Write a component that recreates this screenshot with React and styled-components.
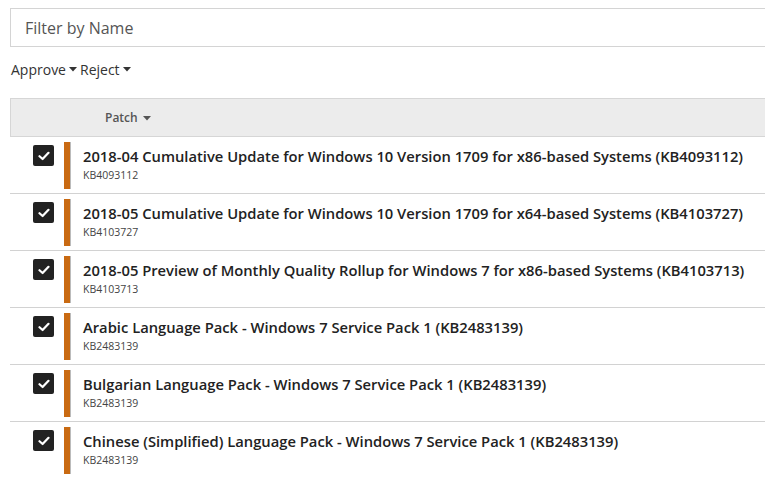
import React from 'react'
import styled, { createGlobalStyle } from 'styled-components'

const patches = [
  { title: '2018-04 Cumulative Update for Windows 10 Version 1709 for x86-based Systems (KB4093112)', kb: 'KB4093112' },
  { title: '2018-05 Cumulative Update for Windows 10 Version 1709 for x64-based Systems (KB4103727)', kb: 'KB4103727' },
  { title: '2018-05 Preview of Monthly Quality Rollup for Windows 7 for x86-based Systems (KB4103713)', kb: 'KB4103713' },
  { title: 'Arabic Language Pack - Windows 7 Service Pack 1 (KB2483139)', kb: 'KB2483139' },
  { title: 'Bulgarian Language Pack - Windows 7 Service Pack 1 (KB2483139)', kb: 'KB2483139' },
  { title: 'Chinese (Simplified) Language Pack - Windows 7 Service Pack 1 (KB2483139)', kb: 'KB2483139' },
]

function Caret() {
  return (
    <CaretIcon viewBox="0 0 8 5">
      <path d="M0 0 L8 0 L4 4.5 Z" fill="currentColor" />
    </CaretIcon>
  )
}

function Check() {
  return (
    <svg width="12" height="10" viewBox="0 0 12 10">
      <path d="M1.5 5.2 L4.6 8 L10.5 1.8" fill="none" stroke="#fff" strokeWidth="2.2" strokeLinecap="round" strokeLinejoin="round" />
    </svg>
  )
}

function App() {
  return (
    <>
      <GlobalStyle />
      <Page>
        <Search placeholder="Filter by Name" />
        <Actions>
          <Action>Approve <Caret /></Action>
          <Action>Reject <Caret /></Action>
        </Actions>
        <Header>
          <HeaderLabel>Patch <Caret /></HeaderLabel>
        </Header>
        {patches.map((p, i) => (
          <Row key={i}>
            <Box><Check /></Box>
            <Bar />
            <Info>
              <Title>{p.title}</Title>
              <Kb>{p.kb}</Kb>
            </Info>
          </Row>
        ))}
      </Page>
    </>
  )
}

export default App

const GlobalStyle = createGlobalStyle`
  body {
    margin: 0;
    background: #fff;
    font-family: "Open Sans", "Liberation Sans", sans-serif;
    overflow: hidden;
  }
`

const Page = styled.div`
  width: 800px;
  padding: 8px 0 0 10px;
`

const Search = styled.input`
  display: block;
  box-sizing: border-box;
  width: 100%;
  height: 39px;
  border: 1px solid #d4d4d4;
  padding: 0 14px;
  font-family: inherit;
  font-size: 16px;
  outline: none;
  &::placeholder {
    color: #555;
  }
`

const Actions = styled.div`
  display: flex;
  gap: 3px;
  margin-top: 12px;
  margin-left: 1px;
  height: 20px;
  align-items: center;
`

const Action = styled.span`
  display: inline-flex;
  align-items: center;
  gap: 3px;
  font-size: 14px;
  color: #333;
`

const CaretIcon = styled.svg`
  width: 8px;
  height: 5px;
  margin-top: 1px;
`

const Header = styled.div`
  box-sizing: border-box;
  margin-top: 19px;
  height: 39px;
  background: #ececec;
  border: 1px solid #d6d6d6;
  border-right: none;
  display: flex;
  align-items: center;
  padding-left: 94px;
`

const HeaderLabel = styled.span`
  display: inline-flex;
  align-items: center;
  gap: 5px;
  font-size: 12px;
  font-weight: 600;
  color: #555;
`

const Row = styled.div`
  display: flex;
  align-items: flex-start;
  height: 57px;
  padding-top: 5px;
  box-sizing: border-box;
  border-bottom: 1px solid #d2d2d2;
  &:last-child {
    border-bottom: none;
  }
`

const Box = styled.div`
  width: 21px;
  height: 21px;
  margin: 3px 0 0 23px;
  background: #222;
  border-radius: 2px;
  display: flex;
  align-items: center;
  justify-content: center;
`

const Bar = styled.div`
  width: 6px;
  height: 47px;
  margin-left: 10px;
  background: #c96a12;
  border-right: 1px solid #bbb;
`

const Info = styled.div`
  margin-left: 12px;
  padding-top: 4px;
`

const Title = styled.div`
  font-size: 14.75px;
  font-weight: 600;
  color: #222;
  line-height: 20px;
  white-space: nowrap;
`

const Kb = styled.div`
  font-size: 10.5px;
  color: #444;
  margin-top: 2px;
`
